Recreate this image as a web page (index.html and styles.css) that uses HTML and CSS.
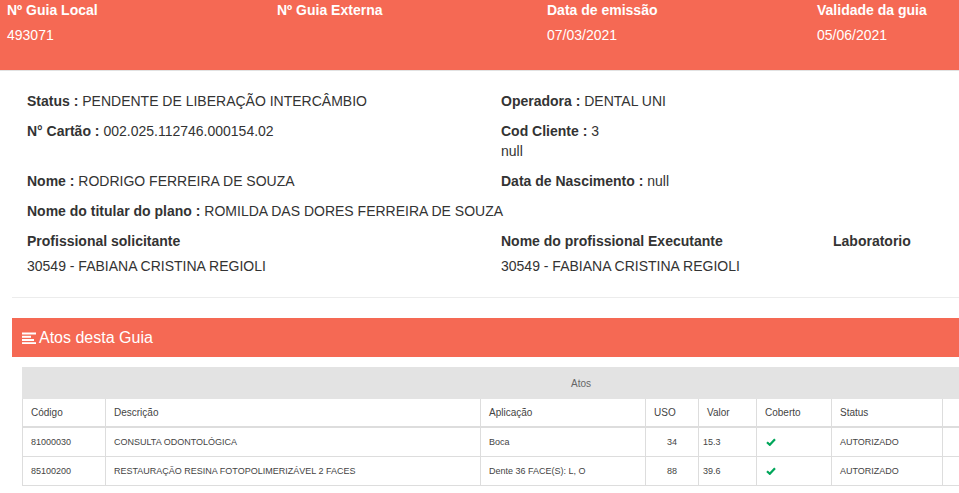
FILE: index.html
```html
<!DOCTYPE html>
<html lang="pt-BR">
<head>
<meta charset="utf-8">
<title>Guia</title>
<link rel="stylesheet" href="styles.css">
</head>
<body>
<div class="page">
  <header class="guide-header">
    <div class="hcol"><div class="hlabel">Nº Guia Local</div><div class="hvalue">493071</div></div>
    <div class="hcol"><div class="hlabel">Nº Guia Externa</div><div class="hvalue"></div></div>
    <div class="hcol"><div class="hlabel">Data de emissão</div><div class="hvalue">07/03/2021</div></div>
    <div class="hcol"><div class="hlabel">Validade da guia</div><div class="hvalue">05/06/2021</div></div>
  </header>

  <section class="info">
    <div class="row two">
      <div><b>Status :</b> PENDENTE DE LIBERAÇÃO INTERCÂMBIO</div>
      <div><b>Operadora :</b> DENTAL UNI</div>
    </div>
    <div class="row two">
      <div><b>N° Cartão :</b> 002.025.112746.000154.02</div>
      <div><b>Cod Cliente :</b> 3<br>null</div>
    </div>
    <div class="row two">
      <div><b>Nome :</b> RODRIGO FERREIRA DE SOUZA</div>
      <div><b>Data de Nascimento :</b> null</div>
    </div>
    <div class="row">
      <div><b>Nome do titular do plano :</b> ROMILDA DAS DORES FERREIRA DE SOUZA</div>
    </div>
    <div class="row three">
      <div><div class="plabel">Profissional solicitante</div><div class="pvalue">30549 - FABIANA CRISTINA REGIOLI</div></div>
      <div><div class="plabel">Nome do profissional Executante</div><div class="pvalue">30549 - FABIANA CRISTINA REGIOLI</div></div>
      <div><div class="plabel">Laboratorio</div><div class="pvalue"></div></div>
    </div>
  </section>

  <hr class="divider">

  <div class="panel">
    <div class="panel-head">
      <svg class="icon" width="14" height="12" viewBox="0 0 14 12" aria-hidden="true">
        <rect x="0" y="0.5" width="14" height="2" fill="#fff"/>
        <rect x="0" y="3.8" width="9" height="2" fill="#fff"/>
        <rect x="0" y="7" width="12" height="2" fill="#fff"/>
        <rect x="0" y="10.2" width="14" height="1.8" fill="#fff"/>
      </svg>
      <span class="panel-title">Atos desta Guia</span>
    </div>
    <div class="panel-body">
      <table class="atos">
        <colgroup>
          <col class="c-cod"><col class="c-desc"><col class="c-apl"><col class="c-uso"><col class="c-val"><col class="c-cob"><col class="c-st"><col class="c-last">
        </colgroup>
        <thead>
          <tr class="group"><th colspan="8">Atos</th></tr>
          <tr class="cols">
            <th>Código</th><th>Descrição</th><th>Aplicação</th><th>USO</th><th>Valor</th><th>Coberto</th><th>Status</th><th></th>
          </tr>
        </thead>
        <tbody>
          <tr>
            <td>81000030</td><td>CONSULTA ODONTOLÓGICA</td><td>Boca</td><td class="num">34</td><td class="val">15.3</td>
            <td><svg class="check" width="10" height="8" viewBox="0 0 10 8"><path d="M1 4.2 L3.8 6.8 L9 1.2" fill="none" stroke="#00a65a" stroke-width="2.2"/></svg></td>
            <td>AUTORIZADO</td><td></td>
          </tr>
          <tr>
            <td>85100200</td><td>RESTAURAÇÃO RESINA FOTOPOLIMERIZÁVEL 2 FACES</td><td>Dente 36 FACE(S): L, O</td><td class="num">88</td><td class="val">39.6</td>
            <td><svg class="check" width="10" height="8" viewBox="0 0 10 8"><path d="M1 4.2 L3.8 6.8 L9 1.2" fill="none" stroke="#00a65a" stroke-width="2.2"/></svg></td>
            <td>AUTORIZADO</td><td></td>
          </tr>
        </tbody>
      </table>
    </div>
  </div>
</div>
</body>
</html>
```

FILE: styles.css
```css
html, body {
  margin: 0;
  padding: 0;
  background: #fff;
  overflow: hidden;
}
body {
  font-family: "Liberation Sans", Arial, sans-serif;
  color: #333;
}
.page {
  width: 1160px;
}
.guide-header {
  display: flex;
  background: #f56954;
  color: #fff;
  height: 70px;
  padding-left: 7px;
  border-bottom: 1px solid #e2e2e2;
  box-sizing: content-box;
}
.hcol {
  width: 270px;
  font-size: 14px;
  line-height: 20px;
}
.hlabel {
  font-weight: bold;
}
.hvalue {
  margin-top: 5px;
  min-height: 20px;
}
.info {
  padding: 20px 0 0 27px;
  font-size: 14px;
  line-height: 20px;
  color: #333;
}
.info b {
  font-weight: bold;
  color: #333;
}
.row {
  margin-bottom: 10px;
}
.row.two {
  display: grid;
  grid-template-columns: 474px auto;
}
.row.three {
  display: grid;
  grid-template-columns: 474px 332px auto;
  margin-bottom: 0;
}
.plabel {
  font-weight: bold;
}
.pvalue {
  margin-top: 5px;
  min-height: 20px;
}
.divider {
  margin: 21px 0 0 12px;
  border: 0;
  border-top: 1px solid #ececec;
  height: 0;
}
.panel {
  margin: 20px 0 0 12px;
}
.panel-head {
  background: #f56954;
  height: 39px;
  display: flex;
  align-items: center;
  padding-left: 10px;
  color: #fff;
}
.icon {
  margin-right: 3px;
  margin-top: 1px;
}
.panel-title {
  font-size: 16px;
}
.panel-body {
  padding: 10px 10px 10px 10px;
}
.atos {
  border-collapse: collapse;
  table-layout: fixed;
  width: 1117px;
  font-size: 10px;
  color: #444;
}
.c-cod { width: 83px; }
.c-desc { width: 375px; }
.c-apl { width: 165px; }
.c-uso { width: 53px; }
.c-val { width: 58px; }
.c-cob { width: 75px; }
.c-st { width: 111px; }
.c-last { width: 197px; }
.atos th, .atos td {
  text-align: left;
  font-weight: normal;
  padding: 0 8px;
  white-space: nowrap;
  overflow: hidden;
}
.atos .group th {
  background: #e3e3e3;
  height: 30px;
  text-align: center;
  color: #666;
  border: 1px solid #e3e3e3;
}
.atos .cols th {
  height: 27px;
  border: 1px solid #ddd;
  border-bottom: 2px solid #ddd;
}
.atos td {
  height: 28px;
  font-size: 9px;
  border: 1px solid #ddd;
}
.atos td.num {
  text-align: right;
  padding-right: 21px;
}
.atos td.val {
  padding-left: 4px;
}
.check {
  display: block;
  margin-left: 1px;
}
```
